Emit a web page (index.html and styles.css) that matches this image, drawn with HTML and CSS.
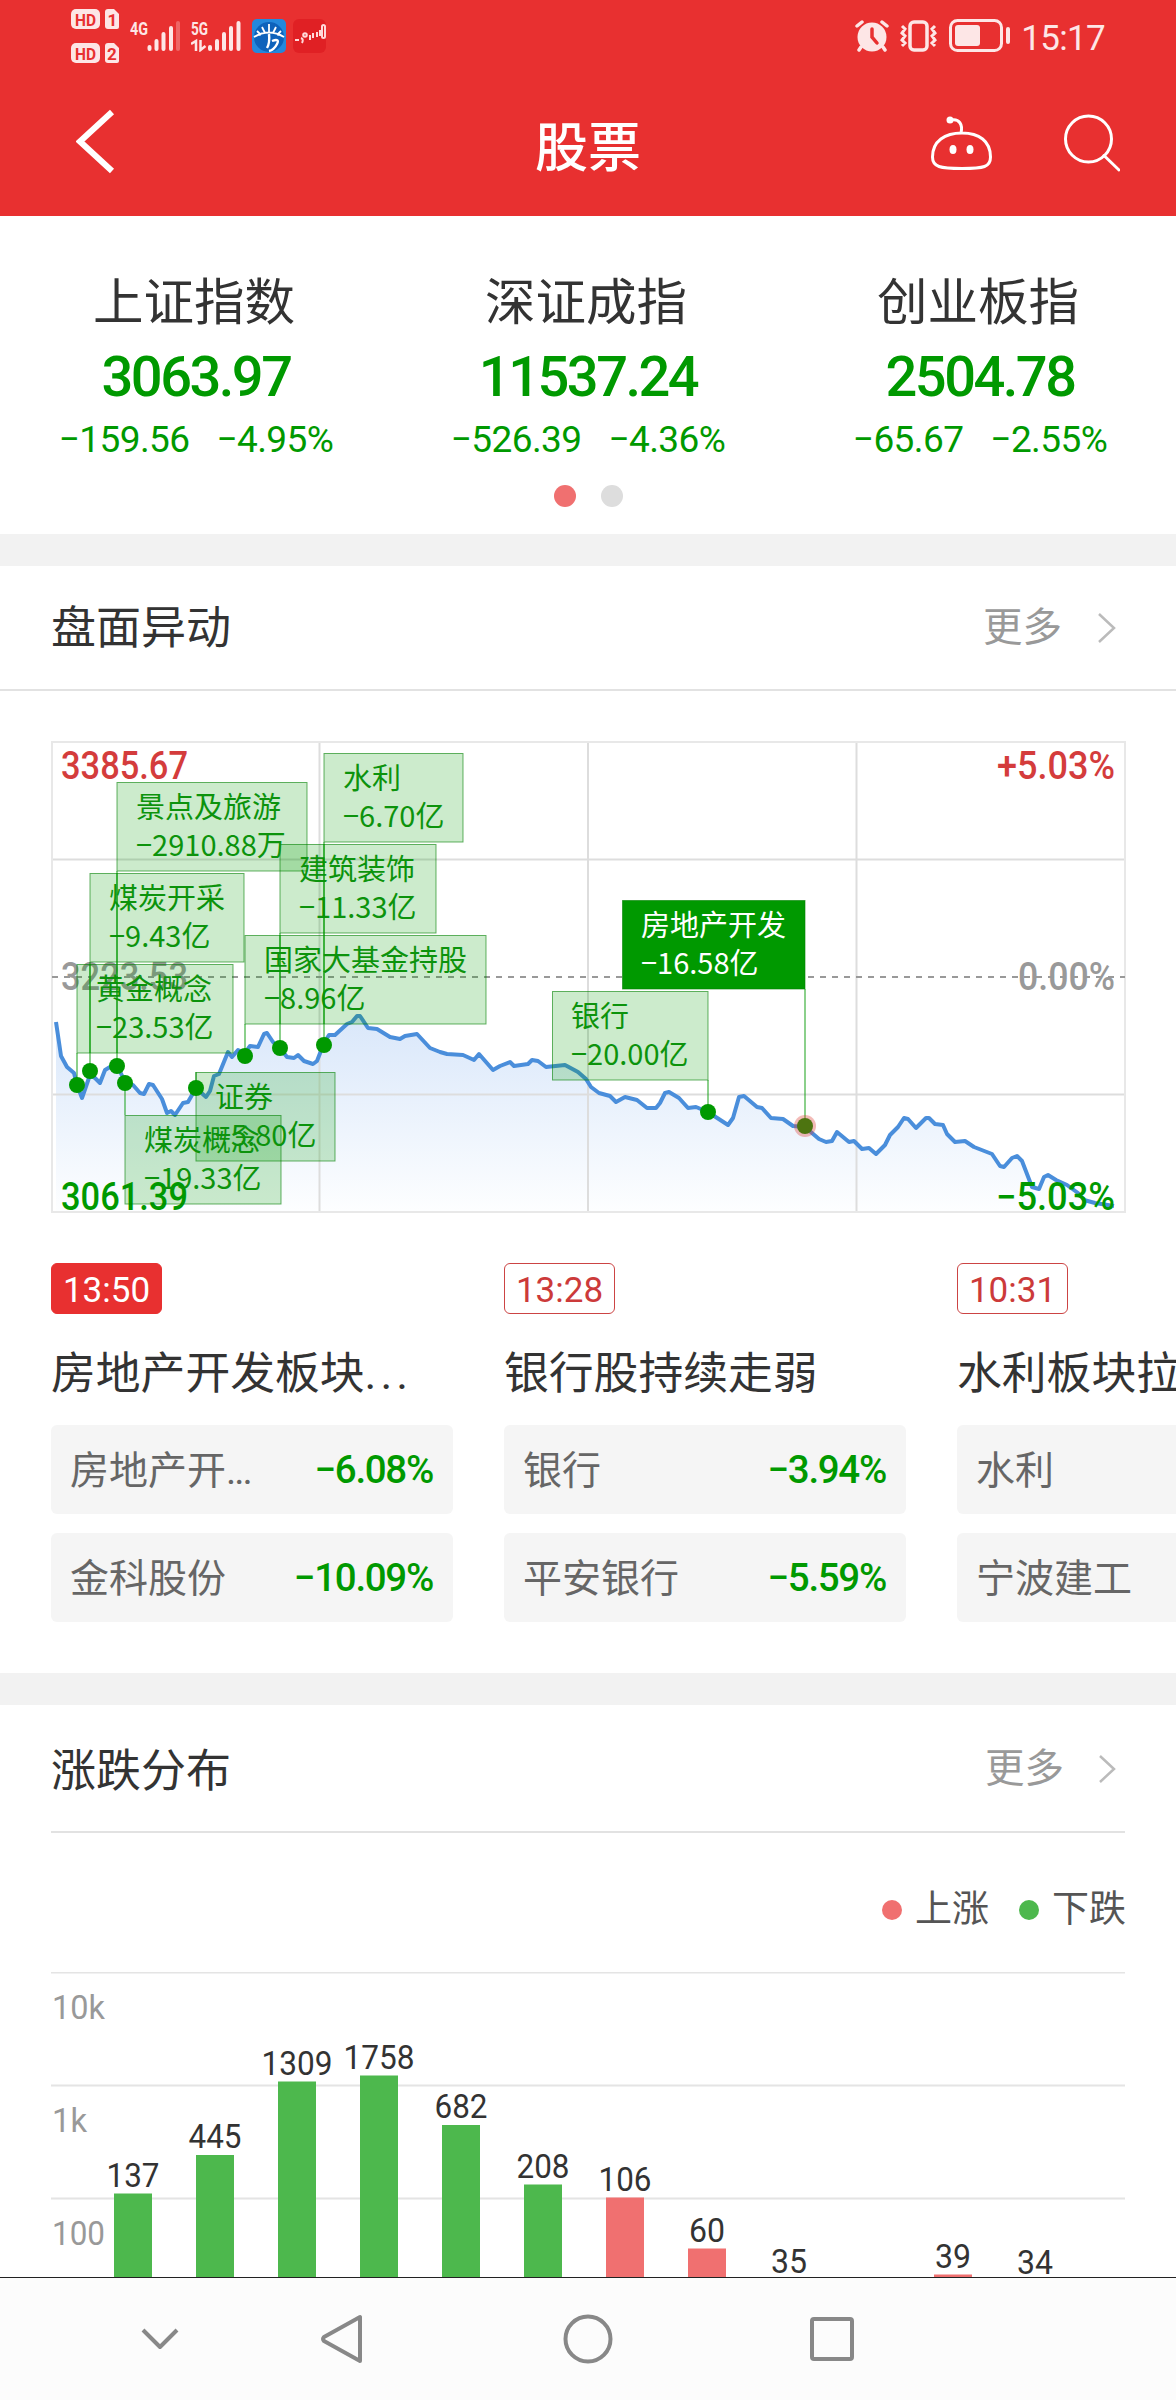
FILE: index.html
```html
<!DOCTYPE html>
<html lang="zh-CN">

<head>
    <meta charset="UTF-8">
    <meta name="viewport" content="width=device-width, initial-scale=1.0">
    <title>股票</title>
    <link rel="stylesheet" href="styles.css">
</head>

<body>

    <header class="header">
        <div class="status-bar">
            <div class="status-left">
                <svg class="icon-hd" width="48" height="54" viewBox="0 0 48 54">
                    <rect x="0" y="0" width="29" height="20" rx="5" />
                    <path d="M37 0h6l5 5v13a2 2 0 0 1-2 2h-9a3 3 0 0 1-3-3V3a3 3 0 0 1 3-3z" />
                    <rect x="0" y="34" width="29" height="20" rx="5" />
                    <path d="M37 34h6l5 5v13a2 2 0 0 1-2 2h-9a3 3 0 0 1-3-3V37a3 3 0 0 1 3-3z" />
                    <text x="4" y="16.5" textLength="21" lengthAdjust="spacingAndGlyphs">HD</text>
                    <text x="36.500" y="16.5">1</text>
                    <text x="4" y="50.5" textLength="21" lengthAdjust="spacingAndGlyphs">HD</text>
                    <text x="36" y="50.5">2</text>
                </svg>
                <svg class="icon-signal" width="51" height="32" viewBox="0 0 51 32">
                    <text x="0" y="14.500" textLength="18" lengthAdjust="spacingAndGlyphs">4G</text>
                    <path d="M19.5 27v2M26.500 21v8M33.500 14v15M41 8v21" />
                    <path class="dim" d="M48 3v26" />
                </svg>
                <svg class="icon-signal" width="51" height="32" viewBox="0 0 51 32">
                    <text x="0" y="14.500" textLength="17" lengthAdjust="spacingAndGlyphs">5G</text>
                    <path d="M19 27v2M26 21v8M33 14v15M40 8v21M47.500 3v26" />
                    <path class="arrows" d="M0 24l5-3v10M9.500 20v10l5-4" />
                </svg>
                <svg class="icon-app" width="34" height="34" viewBox="0 0 34 34">
                    <rect width="34" height="34" rx="5" fill="#2488dc" />
                    <circle cx="17" cy="18" r="15" fill="#0e62bb" />
                    <path d="M2 18Q17 9 32 18M17 5v8M10 8l3 6M24 8l-3 6M5 12l4 4M29 12l-4 4" fill="none" stroke="#fff" stroke-width="1.800" />
                    <path d="M17 15q1 9-2 14M20 22q8-3 5 3t-8 7" fill="none" stroke="#fff" stroke-width="2.400" />
                </svg>
                <svg class="icon-app" width="34" height="34" viewBox="0 0 34 34">
                    <rect width="33" height="34" rx="6" fill="#e02024" />
                    <g fill="none" stroke="#ffd9d9" stroke-width="2">
                        <path d="M2 21h4M8 19q3 1 1 5M17 16v5M20 14v5M24 13v5M27 11v6" />
                        <circle cx="12" cy="16" r="1.800" />
                        <rect x="29" y="6" width="3" height="13" rx="1.500" />
                    </g>
                </svg>
            </div>
            <div class="status-right">
                <svg class="icon-alarm" width="34" height="32" viewBox="0 0 34 32">
                    <circle cx="17" cy="17" r="14.500" fill="#fde6e6" />
                    <path d="M2 6l5-4M32 6l-5-4M6 27l-2 3M28 27l2 3" stroke="#fde6e6" stroke-width="3.500" stroke-linecap="round" />
                    <path d="M17 9v8l5 6" fill="none" stroke="#e83030" stroke-width="3.500" stroke-linecap="round" />
                </svg>
                <svg class="icon-vibrate" width="39" height="32" viewBox="0 0 39 32">
                    <rect x="11" y="2" width="17" height="28" rx="4" stroke-width="3.500" />
                    <path d="M3 6l3 3-3 4 3 3-3 4 3 3-3 3M36 6l-3 3 3 4-3 3 3 4-3 3 3 3" stroke-width="3" />
                </svg>
                <svg class="icon-battery" width="62" height="34" viewBox="0 0 62 34">
                    <rect x="1.500" y="1.500" width="51" height="30" rx="7" fill="none" stroke="#fde6e6" stroke-width="3" />
                    <rect x="6" y="6" width="25" height="21" rx="3" fill="#fde6e6" />
                    <rect x="57" y="8" width="4" height="17" rx="2" fill="#fde6e6" />
                </svg>
                <span class="clock">15:17</span>
            </div>
        </div>
        <div class="title-bar">
            <svg class="icon-back" width="40" height="66" viewBox="0 0 40 66">
                <path d="M36 4L4 33.500L36 63" />
            </svg>
            <h1>股票</h1>
            <div class="title-actions">
                <svg width="62" height="56" viewBox="0 0 62 56">
                    <path d="M31 19C48 19 59.500 27 59.500 43C59.500 53 53 54.500 31 54.500S1.500 53 1.500 43C1.500 27 14 19 31 19zM30 19C32 10 28 5 21 6" />
                    <circle class="solid" cx="19" cy="6" r="3.500" />
                    <ellipse class="solid" cx="22" cy="35.500" rx="3.500" ry="4.500" />
                    <ellipse class="solid" cx="39" cy="35.500" rx="3.500" ry="4.500" />
                </svg>
                <svg width="56" height="58" viewBox="0 0 56 58">
                    <circle cx="24.500" cy="25" r="23" />
                    <path d="M40 41.500L55 56" />
                </svg>
            </div>
        </div>
    </header>

    <section class="indices">
        <div class="index-row">
            <div class="index">
                <div class="index-name">上证指数</div>
                <div class="index-value">3063.97</div>
                <div class="index-change"><span>−159.56</span><span>−4.95%</span></div>
            </div>
            <div class="index">
                <div class="index-name">深证成指</div>
                <div class="index-value">11537.24</div>
                <div class="index-change"><span>−526.39</span><span>−4.36%</span></div>
            </div>
            <div class="index">
                <div class="index-name">创业板指</div>
                <div class="index-value">2504.78</div>
                <div class="index-change"><span>−65.67</span><span>−2.55%</span></div>
            </div>
        </div>
        <div class="dots"><i class="active"></i><i></i></div>
    </section>

    <section class="movement">
        <div class="section-head full-line">
            <h2>盘面异动</h2>
            <a class="more">更多
                <svg width="20" height="32" viewBox="0 0 20 32"><path d="M2 2l15 14L2 30" /></svg>
            </a>
        </div>

        <svg class="line-chart" width="1176" height="510" viewBox="0 720 1176 510">
            <defs>
                <linearGradient id="area" x1="0" y1="0" x2="0" y2="1">
                    <stop offset="0" stop-color="#d9e7fa" />
                    <stop offset="1" stop-color="#fdfeff" />
                </linearGradient>
            </defs>

            <!-- area and price line -->
            <path class="area" d="M56 1022L61 1056L67 1067L74 1073L77 1085L82 1098L90 1075L95 1078L100 1083L105 1070L110 1067L117 1065L125 1082L133 1085L140 1093L144 1094L149 1084L153 1085L162 1099L167 1113L171 1111L175 1115L183 1103L188 1102L196 1088L206 1097L210 1091L214 1076L219 1074L228 1052L232 1057L238 1050L245 1053L250 1046L258 1047L264 1034L267 1033L273 1042L280 1048L287 1057L294 1058L298 1055L304 1061L313 1064L317 1061L324 1043L329 1035L335 1035L347 1024L352 1022L357 1016L360 1016L368 1028L377 1029L390 1037L400 1039L405 1036L417 1034L430 1048L440 1052L447 1054L463 1055L474 1060L479 1054L493 1070L500 1066L510 1062L514 1066L528 1064L532 1060L538 1061L546 1067L565 1065L578 1072L586 1079L591 1087L599 1093L610 1096L616 1102L625 1097L637 1100L647 1108L656 1108L660 1103L665 1093L669 1092L679 1098L688 1108L696 1107L708 1112L728 1125L733 1118L739 1097L744 1096L757 1107L762 1108L771 1118L783 1119L793 1126L805 1127L819 1139L826 1142L832 1141L837 1132L849 1142L854 1141L862 1149L869 1148L876 1154L885 1145L890 1135L898 1127L904 1118L908 1119L916 1128L926 1118L929 1118L935 1124L943 1125L947 1134L955 1142L965 1141L974 1147L992 1154L1000 1166L1004 1167L1012 1158L1017 1156L1022 1161L1032 1187L1039 1189L1044 1177L1048 1175L1056 1180L1067 1185L1078 1193L1084 1200L1095 1203L1114 1206V1211H56z" />

            <path class="grid" d="M51.500 859.500H1125M51.500 1094.500H1125M319.500 742V1211M588 742V1211M856.500 742V1211" />
            <rect class="frame" x="52" y="742" width="1073" height="470" />
            <path class="zero" d="M52 977H1125" />

            <path class="price" d="M56 1022L61 1056L67 1067L74 1073L77 1085L82 1098L90 1075L95 1078L100 1083L105 1070L110 1067L117 1065L125 1082L133 1085L140 1093L144 1094L149 1084L153 1085L162 1099L167 1113L171 1111L175 1115L183 1103L188 1102L196 1088L206 1097L210 1091L214 1076L219 1074L228 1052L232 1057L238 1050L245 1053L250 1046L258 1047L264 1034L267 1033L273 1042L280 1048L287 1057L294 1058L298 1055L304 1061L313 1064L317 1061L324 1043L329 1035L335 1035L347 1024L352 1022L357 1016L360 1016L368 1028L377 1029L390 1037L400 1039L405 1036L417 1034L430 1048L440 1052L447 1054L463 1055L474 1060L479 1054L493 1070L500 1066L510 1062L514 1066L528 1064L532 1060L538 1061L546 1067L565 1065L578 1072L586 1079L591 1087L599 1093L610 1096L616 1102L625 1097L637 1100L647 1108L656 1108L660 1103L665 1093L669 1092L679 1098L688 1108L696 1107L708 1112L728 1125L733 1118L739 1097L744 1096L757 1107L762 1108L771 1118L783 1119L793 1126L805 1127L819 1139L826 1142L832 1141L837 1132L849 1142L854 1141L862 1149L869 1148L876 1154L885 1145L890 1135L898 1127L904 1118L908 1119L916 1128L926 1118L929 1118L935 1124L943 1125L947 1134L955 1142L965 1141L974 1147L992 1154L1000 1166L1004 1167L1012 1158L1017 1156L1022 1161L1032 1187L1039 1189L1044 1177L1048 1175L1056 1180L1067 1185L1078 1193L1084 1200L1095 1203L1114 1206" />

            <!-- axis labels -->
            <g class="axis">
                <text class="up" x="61" y="779" textLength="127" lengthAdjust="spacingAndGlyphs">3385.67</text>
                <text class="flat" x="61" y="990" textLength="127" lengthAdjust="spacingAndGlyphs">3223.53</text>
                <text class="down" x="61" y="1210" textLength="127" lengthAdjust="spacingAndGlyphs">3061.39</text>
                <text class="up" x="997" y="779" textLength="118" lengthAdjust="spacingAndGlyphs">+5.03%</text>
                <text class="flat" x="1018" y="990" textLength="97" lengthAdjust="spacingAndGlyphs">0.00%</text>
                <text class="down" x="996" y="1210" textLength="119" lengthAdjust="spacingAndGlyphs">−5.03%</text>
            </g>

            <!-- flags -->
            <path class="stem" d="M77 1053V1085M90 962V1071M117 871V1066M125 1083V1115M196 1088V1072M245 1024V1056M280 933V1048M324 842V1045M708 1080V1112M805 989V1126" />
            <g class="flag">
                <rect x="324" y="753.500" width="139" height="88.500" />
                <rect x="117" y="782.500" width="190" height="88.500" />
                <rect x="280" y="844.500" width="156" height="88.500" />
                <rect x="90" y="873.500" width="154" height="88.500" />
                <rect x="245" y="935.500" width="241" height="88.500" />
                <rect x="77" y="964.500" width="156" height="88.500" />
                <rect x="196" y="1072.500" width="139" height="88.500" />
                <rect x="125" y="1115.500" width="156" height="88.500" />
                <rect x="552.500" y="991.500" width="155.500" height="88.500" />
                <rect class="current" x="622.500" y="900.500" width="182.500" height="88.500" />
            </g>
            <g class="flag-text">
                <text x="343" y="789">水利</text><text x="343" y="827">−6.70亿</text>
                <text x="136" y="818">景点及旅游</text><text x="136" y="856">−2910.88万</text>
                <text x="299" y="880">建筑装饰</text><text x="299" y="918">−11.33亿</text>
                <text x="109" y="909">煤炭开采</text><text x="109" y="947">−9.43亿</text>
                <text x="264" y="971">国家大基金持股</text><text x="264" y="1009">−8.96亿</text>
                <text x="96" y="1000">黄金概念</text><text x="96" y="1038">−23.53亿</text>
                <text x="215" y="1108">证券</text><text x="215" y="1146">−5.80亿</text>
                <text x="144" y="1151">煤炭概念</text><text x="144" y="1189">−19.33亿</text>
                <text x="571" y="1027">银行</text><text x="571" y="1065">−20.00亿</text>
                <text class="current" x="641" y="936">房地产开发</text><text class="current" x="641" y="974">−16.58亿</text>
            </g>
            <path class="stem" d="M90 964V1053M117 873V1053M280 935V1024M324 844V1024" />
            <g class="point">
                <circle cx="77" cy="1085" r="8" />
                <circle cx="90" cy="1071" r="8" />
                <circle cx="117" cy="1066" r="8" />
                <circle cx="125" cy="1083" r="8" />
                <circle cx="196" cy="1088" r="8" />
                <circle cx="245" cy="1056" r="8" />
                <circle cx="280" cy="1048" r="8" />
                <circle cx="324" cy="1045" r="8" />
                <circle cx="708" cy="1112" r="8" />
                <circle class="halo" cx="805" cy="1126" r="11" />
                <circle class="current" cx="805" cy="1126" r="8" />
            </g>
        </svg>

        <div class="news-list">
            <div class="news">
                <span class="time active">13:50</span>
                <h3>房地产开发板块<span class="ellipsis">...</span></h3>
                <div class="stock"><span>房地产开<span class="tight">...</span></span><b>−6.08%</b></div>
                <div class="stock"><span>金科股份</span><b>−10.09%</b></div>
            </div>
            <div class="news">
                <span class="time">13:28</span>
                <h3>银行股持续走弱</h3>
                <div class="stock"><span>银行</span><b>−3.94%</b></div>
                <div class="stock"><span>平安银行</span><b>−5.59%</b></div>
            </div>
            <div class="news">
                <span class="time">10:31</span>
                <h3>水利板块拉升</h3>
                <div class="stock"><span>水利</span></div>
                <div class="stock"><span>宁波建工</span></div>
            </div>
        </div>
    </section>

    <section class="distribution">
        <div class="section-head">
            <h2>涨跌分布</h2>
            <a class="more">更多
                <svg width="20" height="32" viewBox="0 0 20 32"><path d="M2 3l14 13L2 29" /></svg>
            </a>
        </div>
        <div class="legend">
            <span class="legend-up">上涨</span>
            <span class="legend-down">下跌</span>
        </div>
        <svg class="bar-chart" width="1176" height="305" viewBox="0 1972 1176 305">
            <path class="grid" d="M51 1972.500H1125M51 2085.500H1125M51 2198.500H1125" />
            <g class="scale">
                <text x="52" y="2019" textLength="53" lengthAdjust="spacingAndGlyphs">10k</text>
                <text x="52" y="2132" textLength="35" lengthAdjust="spacingAndGlyphs">1k</text>
                <text x="52" y="2245" textLength="53" lengthAdjust="spacingAndGlyphs">100</text>
            </g>
            <g class="bars-down">
                <rect x="114" y="2193.500" width="38" height="84" />
                <rect x="196" y="2155" width="38" height="122" />
                <rect x="278" y="2081.500" width="38" height="196" />
                <rect x="360" y="2075.500" width="38" height="202" />
                <rect x="442" y="2125" width="38" height="152" />
                <rect x="524" y="2184.500" width="38" height="93" />
            </g>
            <g class="bars-up">
                <rect x="606" y="2197.500" width="38" height="80" />
                <rect x="688" y="2248.500" width="38" height="29" />
                <rect x="934" y="2274.500" width="38" height="3" />
            </g>
            <g class="counts">
                <text x="133" y="2187" textLength="53" lengthAdjust="spacingAndGlyphs">137</text>
                <text x="215" y="2148" textLength="53" lengthAdjust="spacingAndGlyphs">445</text>
                <text x="297" y="2075" textLength="71" lengthAdjust="spacingAndGlyphs">1309</text>
                <text x="379" y="2069" textLength="71" lengthAdjust="spacingAndGlyphs">1758</text>
                <text x="461" y="2118" textLength="53" lengthAdjust="spacingAndGlyphs">682</text>
                <text x="543" y="2178" textLength="53" lengthAdjust="spacingAndGlyphs">208</text>
                <text x="625" y="2191" textLength="53" lengthAdjust="spacingAndGlyphs">106</text>
                <text x="707" y="2242" textLength="36" lengthAdjust="spacingAndGlyphs">60</text>
                <text x="789" y="2273" textLength="36" lengthAdjust="spacingAndGlyphs">35</text>
                <text x="953" y="2268" textLength="36" lengthAdjust="spacingAndGlyphs">39</text>
                <text x="1035" y="2274" textLength="36" lengthAdjust="spacingAndGlyphs">34</text>
            </g>
        </svg>
    </section>

    <nav class="nav-bar">
        <svg width="38" height="22" viewBox="0 0 38 22"><path d="M2 2l17 17L36 2" /></svg>
        <svg width="44" height="50" viewBox="0 0 44 50"><path d="M40 3v44L4 27q-2-2 0-4z" /></svg>
        <svg width="50" height="50" viewBox="0 0 50 50"><circle cx="25" cy="25" r="22.500" /></svg>
        <svg width="46" height="46" viewBox="0 0 46 46"><rect x="3" y="3" width="40" height="40" rx="2" /></svg>
    </nav>

</body>

</html>
```

FILE: styles.css
```css
* {
    box-sizing: border-box;
}

body {
    margin: 0;
    width: 1176px;
    height: 2400px;
    overflow: hidden;
    background-color: #fff;
    color: #333;
    font-family: Roboto, "Noto Sans CJK SC", sans-serif;
}

h1, h2, h3 {
    margin: 0;
    font-weight: 400;
}

svg {
    display: block;
    flex: none;
}

/* Header */
.header {
    height: 216px;
    background-color: #e83030;
    color: #fff;
}

.status-bar {
    display: flex;
    justify-content: space-between;
    height: 72px;
    padding: 0 71px;
}

.status-left {
    display: flex;
    align-items: center;
}

.icon-hd {
    margin-right: 11px;
    fill: #fde6e6;
}

.icon-hd text {
    fill: #e83030;
    font-size: 17px;
    font-weight: 700;
}

.icon-signal {
    margin-right: 10px;
    fill: none;
    stroke: #fde6e6;
    stroke-width: 4;
    stroke-linecap: round;
}

.icon-signal text {
    fill: #fde6e6;
    stroke: none;
    font-size: 19px;
    font-weight: 700;
}

.icon-signal .dim {
    opacity: 0.3;
}

.icon-signal .arrows {
    stroke-width: 2.5;
    stroke-linecap: butt;
}

.icon-app {
    margin-right: 7px;
}

.status-right {
    display: flex;
    align-items: center;
}

.icon-alarm {
    margin-right: 10px;
}

.icon-vibrate {
    margin-right: 11px;
    fill: none;
    stroke: #fde6e6;
}

.icon-battery {
    margin-right: 10px;
}

.clock {
    color: #fde6e6;
    font-size: 35px;
    line-height: 40px;
    letter-spacing: -0.7px;
    padding-top: 5px;
}

.title-bar {
    display: grid;
    grid-template-columns: 1fr auto 1fr;
    align-items: center;
    height: 144px;
    padding: 6px 56px 0 76px;
}

.icon-back {
    fill: none;
    stroke: #fff;
    stroke-width: 6;
    margin-bottom: 13px;
}

.title-bar h1 {
    font-size: 53px;
    font-weight: 500;
    line-height: 70px;
    margin: 4px 0 0 -20px;
}

.title-actions {
    display: flex;
    justify-content: flex-end;
    gap: 71px;
    margin-bottom: 8px;
    fill: none;
    stroke: #fff;
    stroke-width: 3;
    stroke-linecap: round;
}

.title-actions .solid {
    fill: #fff;
    stroke: none;
}

/* Indices */
.indices {
    height: 350px;
    padding-top: 52px;
    border-bottom: 32px solid #f2f2f2;
}

.index-row {
    display: grid;
    grid-template-columns: repeat(3, 1fr);
    text-align: center;
}

.index-name {
    font-size: 50.5px;
    line-height: 70px;
    margin-left: -4px;
}

.index-value {
    color: #009900;
    font-size: 56px;
    font-weight: 500;
    line-height: 78px;
    letter-spacing: -2.5px;
}

.index-change {
    display: flex;
    justify-content: center;
    gap: 27px;
    color: #009900;
    font-size: 37px;
    line-height: 48px;
    letter-spacing: -0.6px;
}

.dots {
    display: flex;
    justify-content: center;
    gap: 25px;
    margin-top: 21px;
}

.dots i {
    width: 22px;
    height: 22px;
    border-radius: 50%;
    background-color: #ddd;
}

.dots .active {
    background-color: #f07070;
}

/* Section head */
.section-head {
    display: flex;
    justify-content: space-between;
    align-items: center;
    height: 128px;
    margin: 0 51px;
    padding-top: 2px;
    border-bottom: 2px solid #e2e2e2;
}

.section-head.full-line {
    height: 125px;
    margin: 0;
    padding: 0 51px;
}

.section-head h2 {
    padding-top: 2px;
    font-size: 45px;
    line-height: 60px;
}

.more {
    display: flex;
    align-items: center;
    gap: 35px;
    padding-right: 8px;
    color: #999;
    font-size: 39.5px;
    line-height: 60px;
}

.more svg {
    fill: none;
    stroke: #bbb;
    stroke-width: 2.5;
}

/* Line chart */
.movement {
    height: 1139px;
    overflow: hidden;
    border-bottom: 32px solid #f2f2f2;
}

.line-chart {
    margin-top: 29px;
}

.grid {
    fill: none;
    stroke: #ddd;
    stroke-width: 2;
}

.frame {
    fill: none;
    stroke: #e8e8e8;
    stroke-width: 2;
}

.zero {
    stroke: #999;
    stroke-width: 2;
    stroke-dasharray: 6 6;
}

.area {
    fill: url(#area);
}

.price {
    fill: none;
    stroke: #4a8edb;
    stroke-width: 4;
    stroke-linejoin: round;
}

.axis text {
    font-size: 38px;
    font-weight: 500;
}

.up {
    fill: #d43c3c;
}

.flat {
    fill: #999;
}

.down {
    fill: #009900;
}

.stem {
    stroke: #009900;
    stroke-width: 1.5;
    opacity: 0.6;
}

.flag rect {
    fill: rgba(0, 153, 0, 0.2);
    stroke: rgba(0, 128, 0, 0.6);
    stroke-width: 1;
}

.flag .current {
    fill: #009900;
}

.flag-text text {
    fill: #0c930c;
    font-family: "Noto Sans CJK SC", sans-serif;
    font-size: 29px;
}

.flag-text .current {
    fill: #fff;
}

.point {
    fill: #009900;
}

.point .halo {
    fill: rgba(220, 60, 50, 0.35);
}

.point .current {
    fill: #4d7410;
}

/* News */
.news-list {
    display: flex;
    gap: 51px;
    margin: 33px 0 0 51px;
}

.news {
    flex: none;
    width: 402px;
}

.time {
    display: block;
    width: 111px;
    height: 51px;
    border: 1px solid #c44;
    border-radius: 6px;
    color: #cc3a3a;
    font-size: 35px;
    line-height: 53px;
    text-align: center;
}

.time.active {
    border-color: #e83030;
    background-color: #e83030;
    color: #fff;
}

.news h3 {
    height: 111px;
    padding-top: 28px;
    font-size: 44.8px;
    line-height: 64px;
    white-space: nowrap;
}

.ellipsis {
    letter-spacing: 4px;
}

.stock {
    display: flex;
    justify-content: space-between;
    align-items: center;
    height: 89px;
    margin-bottom: 19px;
    padding: 0 20px 0 19px;
    border-radius: 6px;
    background-color: #f5f5f5;
    color: #666;
    font-size: 39px;
}

.stock > span {
    margin-top: -5px;
}

.tight {
    letter-spacing: -2px;
}

.stock b {
    color: #009900;
    font-size: 38.5px;
    font-weight: 500;
    letter-spacing: -1.3px;
}

/* Distribution */
.distribution .section-head h2 {
    padding-top: 5px;
}

.distribution .more {
    gap: 34px;
    padding-right: 7px;
}

.legend {
    display: flex;
    justify-content: flex-end;
    gap: 30px;
    height: 139px;
    padding: 50px 50px 0 0;
    color: #555;
    font-size: 37px;
    line-height: 54px;
}

.legend span {
    display: flex;
    align-items: center;
    height: 54px;
    gap: 13px;
}

.legend span::before {
    content: "";
    width: 20px;
    height: 20px;
    border-radius: 50%;
}

.legend-up::before {
    background-color: #f07070;
}

.legend-down::before {
    background-color: #4db84d;
}

.bar-chart text {
    font-size: 33px;
}

.bar-chart .grid {
    stroke: #e4e4e4;
}

.scale {
    fill: #999;
}

.bars-down {
    fill: #4db84d;
}

.bars-up {
    fill: #f07070;
}

.counts {
    fill: #333;
    text-anchor: middle;
}

/* System navigation */
.nav-bar {
    display: flex;
    align-items: center;
    height: 123px;
    padding-left: 141px;
    border-top: 1px solid #222;
    background-color: #fcfcfc;
    fill: none;
    stroke: #888;
    stroke-width: 4;
    stroke-linejoin: round;
}

.nav-bar svg:nth-child(2) {
    margin-left: 141px;
}

.nav-bar svg:nth-child(3) {
    margin-left: 199px;
}

.nav-bar svg:nth-child(4) {
    margin-left: 196px;
}
```
